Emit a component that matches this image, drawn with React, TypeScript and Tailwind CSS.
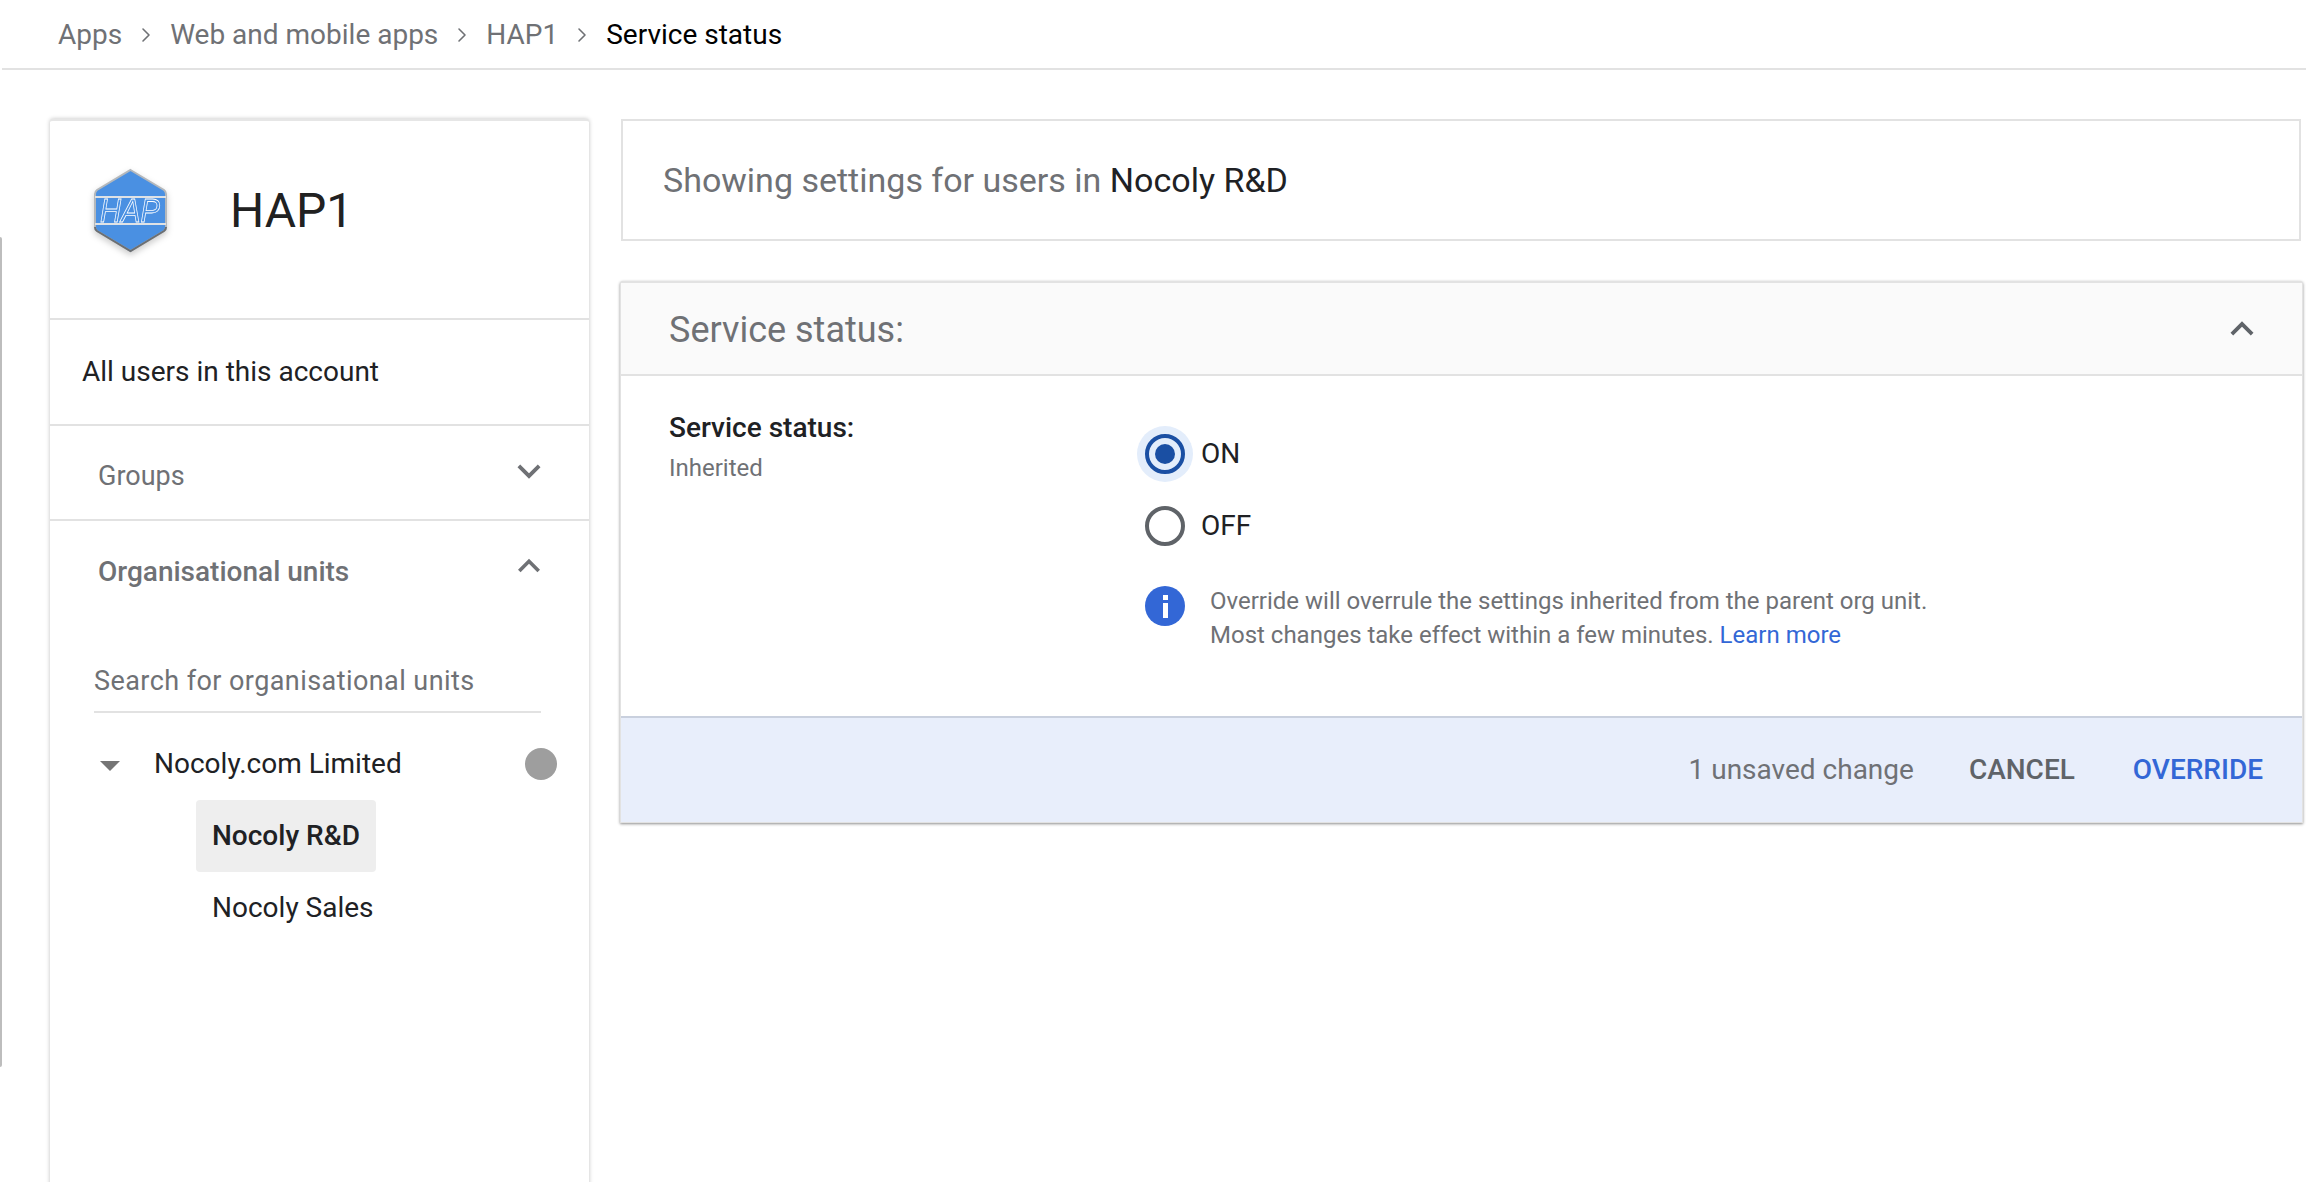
import { ChevronRight } from "lucide-react";

const Expand = ({ up, size, className }: { up?: boolean; size: number; className?: string }) => (
  <svg width={size} height={size} viewBox="0 0 24 24" fill="currentColor" className={className}>
    {up ? (
      <path d="M7.41 15.41 12 10.83l4.59 4.58L18 14l-6-6-6 6z" />
    ) : (
      <path d="M16.59 8.59 12 13.17 7.41 8.59 6 10l6 6 6-6z" />
    )}
  </svg>
);

const HapLogo = () => (
  <svg width="75" height="86" viewBox="0 0 75 86" className="overflow-visible drop-shadow-[0_3px_3px_rgba(0,0,0,0.2)]">
    <path d="M37.5 2 L71 22 Q73 23.5 73 26 V59 Q73 61.5 71 63 L37.5 83 L4 63 Q2 61.5 2 59 V26 Q2 23.5 4 22 Z" fill="#4a90e2" stroke="#b4b8bc" strokeWidth="2" />
    <path d="M2 59 Q2 61.5 4 63 L37.5 83 L71 63 Q73 61.5 73 59" fill="none" stroke="#6b6f73" strokeWidth="2" />
    <rect x="2" y="28" width="71" height="2" fill="#dfe2e5" />
    <rect x="2" y="55" width="71" height="2" fill="#dfe2e5" />
    <text x="7" y="54" textLength="60" lengthAdjust="spacingAndGlyphs" fontFamily="'Liberation Sans', sans-serif" fontStyle="italic" fontSize="33" fill="#4a90e2" stroke="#ffffff" strokeWidth="0.8">HAP</text>
  </svg>
);

const Crumb = ({ label, last }: { label: string; last?: boolean }) => (
  <>
    <span className={last ? "text-black" : "text-[#6f7175]"}>{label}</span>
    {!last && <ChevronRight size={24} strokeWidth={1.6} className="mx-[12px] text-[#6f7175]" />}
  </>
);

const Sidebar = () => (
  <aside className="w-[539px] shrink-0 rounded-t-[3px] bg-white border-t-2 border-t-[#e6e6e6] shadow-[0_0_4px_rgba(0,0,0,0.25)] h-[1100px]">
    <div className="h-[199px] flex items-center pl-[43px] pb-[17px] border-b-2 border-[#e2e2e2]">
      <HapLogo />
      <span className="ml-[62px] text-[48px] text-[#212121] leading-none">HAP1</span>
    </div>
    <div className="h-[106px] flex items-center pl-[32px] text-[28px] text-[#202124] border-b-2 border-[#e2e2e2]">
      All users in this account
    </div>
    <div className="h-[95px] flex items-center justify-between pl-[48px] pr-[37px] text-[27px] text-[#6f7175] border-b-2 border-[#e2e2e2]">
      <span className="pt-[8px]">Groups</span>
      <Expand size={46} className="-mt-[4px]" />
    </div>
    <div className="h-[96px] flex items-center justify-between pl-[48px] pr-[38px] text-[28px] font-medium text-[#6f7175]">
      <span className="pt-[5px]">Organisational units</span>
      <Expand up size={44} className="-mt-[7px]" />
    </div>
    <div className="mx-[44px] w-[447px] h-[62px] mt-[34px] flex items-center border-b-2 border-[#e2e2e2] text-[27px] tracking-[0.43px] text-[#6f7175]">
      Search for organisational units
    </div>
    <div className="relative h-[72px] mt-[15px] flex items-center pl-[104px] text-[28px] text-[#202124]">
      <span className="absolute left-[50px] top-[33px] border-x-[10px] border-x-transparent border-t-[10px] border-t-[#757575]" />
      Nocoly.com Limited
      <span className="absolute left-[475px] top-[20px] w-[32px] h-[32px] rounded-full bg-[#9e9e9e]" />
    </div>
    <div className="pl-[146px] flex flex-col items-start text-[28px] text-[#202124]">
      <div className="h-[72px] flex items-center px-[16px] rounded-[4px] bg-[#eeeeee] font-medium">Nocoly R&amp;D</div>
      <div className="h-[72px] flex items-center px-[16px]">Nocoly Sales</div>
    </div>
  </aside>
);

const Radio = ({ label, checked }: { label: string; checked?: boolean }) => (
  <div className="flex items-center h-[72px]">
    <div className={`w-[56px] h-[56px] rounded-full flex items-center justify-center ${checked ? "bg-[#e3edfb]" : ""}`}>
      <div className={`w-[40px] h-[40px] rounded-full border-[4px] flex items-center justify-center ${checked ? "border-[#1a4fa3]" : "border-[#5f6368]"}`}>
        {checked && <div className="w-[20px] h-[20px] rounded-full bg-[#1a4fa3]" />}
      </div>
    </div>
    <span className="ml-[8px] text-[28px] text-[#202124]">{label}</span>
  </div>
);

const StatusCard = () => (
  <section className="mt-[40px] ml-[-1px] w-[1683px] rounded-t-[3px] bg-white border border-[#e2e2e2] border-t-2 shadow-[0_1px_3px_rgba(0,0,0,0.45)]">
    <div className="h-[93px] flex items-center justify-between pl-[48px] pr-[37px] bg-[#fafafa] border-b-2 border-[#e2e2e2]">
      <span className="text-[36px] text-[#6f7175] pt-[3px]">Service status:</span>
      <Expand up size={46} className="text-[#5f6368]" />
    </div>
    <div className="h-[340px] flex pl-[48px]">
      <div className="w-[468px] pt-[32px]">
        <div className="text-[28px] font-medium text-[#202124] leading-[40px]">Service status:</div>
        <div className="text-[24px] text-[#6f7175] leading-[40px]">Inherited</div>
      </div>
      <div className="pt-[42px]">
        <Radio label="ON" checked />
        <Radio label="OFF" />
        <div className="flex mt-[22px] pl-[8px]">
          <div className="w-[40px] h-[40px] mt-[2px] rounded-full bg-[#3367d6] flex flex-col items-center justify-center gap-[3px]">
            <span className="w-[5px] h-[5px] bg-white" />
            <span className="w-[5px] h-[15px] bg-white" />
          </div>
          <p className="ml-[25px] text-[24px] leading-[34px] text-[#6f7175]">
            Override will overrule the settings inherited from the parent org unit.
            <br />
            Most changes take effect within a few minutes. <span className="text-[#3367d6]">Learn more</span>
          </p>
        </div>
      </div>
    </div>
    <div className="h-[106px] flex items-center justify-end pr-[39px] bg-[#e8eefb] border-t-2 border-[#c9d0de] text-[28px]">
      <span className="text-[#6f7175]">1 unsaved change</span>
      <span className="ml-[55px] font-medium text-[#5f6368]">CANCEL</span>
      <span className="ml-[58px] font-medium text-[#3367d6]">OVERRIDE</span>
    </div>
  </section>
);

export default function App() {
  return (
    <div className="relative h-[1182px] overflow-hidden bg-white font-['Roboto',sans-serif]">
      {/* sliver of the collapsed nav behind the page */}
      <div className="absolute left-0 top-[237px] w-[2px] h-[830px] rounded-r-[2px] bg-[#bdbdbd]" />
      <header className="h-[70px] ml-[2px] pl-[56px] pt-[1px] flex items-center border-b-2 border-[#e2e2e2] text-[28px]">
        <Crumb label="Apps" />
        <Crumb label="Web and mobile apps" />
        <Crumb label="HAP1" />
        <Crumb label="Service status" last />
      </header>
      <main className="flex pl-[50px] pt-[49px] gap-[32px]">
        <Sidebar />
        <div className="flex-1 min-w-0">
          <div className="w-[1680px] h-[122px] flex items-center pl-[40px] border-2 border-[#e2e2e2] text-[34px] text-[#6f7175]">
            Showing settings for users in&nbsp;<span className="text-[#202124]">Nocoly R&amp;D</span>
          </div>
          <StatusCard />
        </div>
      </main>
    </div>
  );
}
